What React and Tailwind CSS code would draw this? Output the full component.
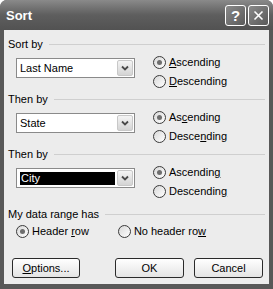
import React from "react";

const font = { fontFamily: '"Liberation Sans", Arial, sans-serif' };

function Radio({ checked, children }) {
  return (
    <div className="flex items-center h-[19px]">
      <span className="w-[13px] h-[13px] rounded-full border border-[#3a3a3a] bg-gradient-to-br from-[#d8d8d8] to-white flex items-center justify-center shrink-0">
        {checked && <span className="w-[5px] h-[5px] rounded-full bg-[#6e6e6e]" />}
      </span>
      <span className="ml-[3px] text-[11px] leading-none text-black">{children}</span>
    </div>
  );
}

function GroupLabel({ children }) {
  return (
    <div className="flex items-center h-[13px]">
      <span className="text-[11px] leading-none text-black whitespace-nowrap">{children}</span>
      <span className="flex-1 h-px bg-[#cfcfcf] ml-[6px]" />
    </div>
  );
}

function Combo({ value, selected }) {
  return (
    <div className="mt-[7px] ml-[8px] w-[119px] h-[20px] border border-[#8a8a8a] bg-white flex items-center">
      <div className="flex-1 pl-[3px] pr-[2px] h-full flex items-center">
        {selected ? (
          <span className="w-full h-[13px] bg-black text-white text-[11px] leading-[13px] pl-[1px]">{value}</span>
        ) : (
          <span className="text-[11px] leading-none text-black">{value}</span>
        )}
      </div>
      <div className="w-[16px] h-[16px] mr-[1px] rounded-[2px] border border-[#c8c8c8] bg-gradient-to-b from-[#f4f4f4] to-[#d4d4d4] flex items-center justify-center">
        <svg width="8" height="6" viewBox="0 0 8 6">
          <path d="M1 1.5 L4 4.5 L7 1.5" stroke="#4a4a4a" strokeWidth="1.8" fill="none" />
        </svg>
      </div>
    </div>
  );
}

function SortGroup({ label, value, selected, asc, desc }) {
  return (
    <div className="mb-[2px]">
      <GroupLabel>{label}</GroupLabel>
      <div className="flex items-start">
        <Combo value={value} selected={selected} />
        <div className="ml-[18px] mt-[2px] flex flex-col">
          <Radio checked>{asc}</Radio>
          <Radio>{desc}</Radio>
        </div>
      </div>
    </div>
  );
}

function Btn({ children, className = "" }) {
  return (
    <div
      className={
        "h-[20px] rounded-[3px] border border-[#2a2a2a] bg-gradient-to-b from-white to-[#e4e4e4] flex items-center justify-center text-[11px] leading-none text-black " +
        className
      }
    >
      {children}
    </div>
  );
}

export default function App() {
  return (
    <div style={font} className="w-[273px] h-[289px] bg-white">
      <div className="w-[273px] h-[289px] rounded-t-[7px] bg-[#585858] flex flex-col overflow-hidden">
        <div className="h-[30px] shrink-0 bg-gradient-to-b from-[#8a8a8a] via-[#5e5e5e] to-[#525252] flex items-center pl-[6px] pr-[4px]">
          <span className="text-white font-bold text-[13px] leading-none">Sort</span>
          <div className="ml-auto flex gap-[2px]">
            <div className="w-[21px] h-[21px] rounded-[3px] border border-white bg-gradient-to-br from-[#8a8a8a] to-[#5a5a5a] flex items-center justify-center text-white font-bold text-[15px] leading-none">
              ?
            </div>
            <div className="w-[21px] h-[21px] rounded-[3px] border border-white bg-gradient-to-br from-[#8a8a8a] to-[#5a5a5a] flex items-center justify-center">
              <svg width="11" height="11" viewBox="0 0 11 11">
                <path d="M1.5 1.5 L9.5 9.5 M9.5 1.5 L1.5 9.5" stroke="white" strokeWidth="1.6" />
              </svg>
            </div>
          </div>
        </div>
        <div className="flex-1 mx-[4px] mb-[5px] bg-[#ececec] px-[4px] pt-[8px] flex flex-col">
          <SortGroup
            label="Sort by"
            value="Last Name"
            asc={<><u>A</u>scending</>}
            desc={<><u>D</u>escending</>}
          />
          <SortGroup
            label="Then by"
            value="State"
            asc={<>As<u>c</u>ending</>}
            desc={<>Desce<u>n</u>ding</>}
          />
          <SortGroup
            label="Then by"
            value="City"
            selected
            asc={<>Ascendin<u>g</u></>}
            desc={<>Descendin<u>g</u></>}
          />
          <div className="mt-[5px]">
            <GroupLabel>My data range has</GroupLabel>
            <div className="flex mt-[1px] ml-[8px] gap-[29px]">
              <Radio checked>Header <u>r</u>ow</Radio>
              <Radio>No header ro<u>w</u></Radio>
            </div>
          </div>
          <div className="flex mt-[17px] pl-[4px] pr-[2px]">
            <Btn className="w-[68px]"><span><u>O</u>ptions...</span></Btn>
            <Btn className="w-[69px] ml-auto">OK</Btn>
            <Btn className="w-[69px] ml-[10px]">Cancel</Btn>
          </div>
        </div>
      </div>
    </div>
  );
}
